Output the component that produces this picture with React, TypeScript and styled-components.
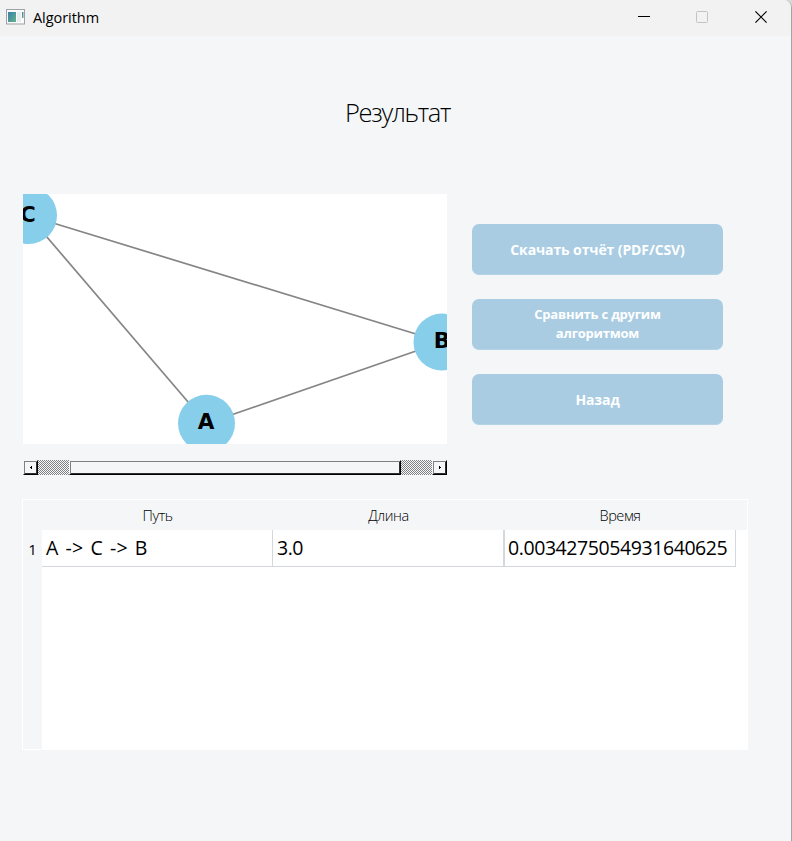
import React from 'react';
import styled, { createGlobalStyle } from 'styled-components';

const GlobalStyle = createGlobalStyle`
  * { box-sizing: border-box; }
  body {
    margin: 0;
    background: #d9dad8;
    font-family: "Open Sans", "Noto Sans", sans-serif;
    color: #000;
  }
`;

const Window = styled.div`
  width: 792px;
  height: 841px;
  overflow: hidden;
  background: #f4f6f8;
  border-right: 1px solid #a3a4a5;
  border-radius: 0 8px 0 0;
`;

const TitleBar = styled.header`
  display: flex;
  align-items: center;
  height: 36px;
  padding: 0 1px 0 6px;
  background: #f2f2f2;
`;

const IconSvg = styled.svg`
  margin-bottom: 2px;
`;

const WindowTitle = styled.span`
  flex: 1;
  margin-left: 8px;
  font-size: 14.5px;
  line-height: 20px;
  letter-spacing: -0.05px;
`;

const WindowButton = styled.button`
  display: flex;
  align-items: center;
  justify-content: center;
  width: 58.5px;
  height: 34px;
  margin-bottom: 2px;
  padding: 0;
  border: 0;
  background: none;
`;

const Heading = styled.h1`
  margin: 57px 0 0;
  padding-left: 4px;
  height: 38px;
  font-size: 25.5px;
  font-weight: 300;
  line-height: 38px;
  text-align: center;
  letter-spacing: -1.3px;
`;

const Body = styled.main`
  display: flex;
  gap: 25px;
  margin: 63px 0 0 23px;
`;

const GraphColumn = styled.section`
  width: 424px;
`;

const Canvas = styled.svg`
  display: block;
  background: #fff;
`;

const ScrollBar = styled.div`
  display: flex;
  height: 15px;
  margin-top: 16px;
  background: repeating-conic-gradient(#808080 0 25%, #f8f9fa 0 50%) 0 0 / 2px 2px;
`;

const ScrollPart = styled.div<{ $width: number; $gap?: number }>`
  display: flex;
  align-items: center;
  justify-content: center;
  width: ${(p) => p.$width}px;
  height: 15px;
  margin-left: ${(p) => p.$gap ?? 0}px;
  border: 1px solid;
  border-color: #f4f6f8 #000 #000 #f4f6f8;
  background: #f4f6f8;
  box-shadow: inset 1px 1px #808080, inset -1px -1px #303030;
`;

const Actions = styled.nav`
  display: flex;
  flex-direction: column;
  gap: 24px;
  width: 251px;
  padding-top: 30px;
`;

const ActionButton = styled.button<{ $size: number; $spacing: number }>`
  height: 51px;
  padding: 0 20px;
  border: 0;
  border-bottom: 1px solid #b4d3e6;
  border-radius: 7px;
  background: #a9cce3;
  color: #fff;
  font-family: "Open Sans", "Noto Sans", sans-serif;
  font-size: ${(p) => p.$size}px;
  font-weight: 700;
  line-height: 19px;
  letter-spacing: ${(p) => p.$spacing}px;
  white-space: pre;
`;

const Table = styled.section`
  display: grid;
  grid-template-columns: 19px 231px 231px 232px 11px;
  grid-template-rows: 30px 37px 1fr;
  width: 726px;
  height: 251px;
  margin: 24px 0 0 22px;
  border: 1px solid #fff;
  background: #fff;
`;

const HeaderFill = styled.div`
  background: #f4f6f8;
`;

const ColumnHeader = styled(HeaderFill)`
  padding-top: 1px;
  text-align: center;
  font-size: 14.5px;
  font-weight: 300;
  line-height: 30px;
  letter-spacing: -0.45px;
`;

const RowHeader = styled(HeaderFill)`
  padding-top: 1px;
  text-align: center;
  font-size: 15px;
  line-height: 37px;
`;

const Cell = styled.div<{ $spacing: number; $wordSpacing?: number; $double?: boolean }>`
  padding-left: ${(p) => (p.$double ? 3 : 4)}px;
  border: solid #d4d7db;
  border-width: 0 1px 1px ${(p) => (p.$double ? 1 : 0)}px;
  font-size: 19.5px;
  line-height: 36px;
  letter-spacing: ${(p) => p.$spacing}px;
  word-spacing: ${(p) => p.$wordSpacing ?? 0}px;
  white-space: nowrap;
`;

const edges = [
  [28.5, 215.5, 206.5, 423.5],
  [28.5, 215.5, 442, 342],
  [206.5, 423.5, 442, 342],
];

const nodes = [
  { label: 'C', x: 28.5, y: 215.5, tx: 28 },
  { label: 'A', x: 206.5, y: 423.3, tx: 206 },
  { label: 'B', x: 442, y: 342, tx: 442 },
];

const Graph = () => (
  <Canvas width="424" height="250" viewBox="23 194 424 250">
    {edges.map(([x1, y1, x2, y2], i) => (
      <line key={i} x1={x1} y1={y1} x2={x2} y2={y2} stroke="#858585" strokeWidth="1.7" />
    ))}
    {nodes.map((n) => (
      <g key={n.label}>
        <circle cx={n.x} cy={n.y} r="28.5" fill="#87ceeb" />
        <text
          x={n.tx}
          y={n.y + 6}
          textAnchor="middle"
          fontFamily="DejaVu Sans, sans-serif"
          fontWeight="700"
          fontSize="21.5"
        >
          {n.label}
        </text>
      </g>
    ))}
  </Canvas>
);

const AppIcon = () => (
  <IconSvg width="19" height="16" viewBox="0 0 19 16">
    <defs>
      <linearGradient id="pane" x1="0" y1="0" x2="1" y2="1">
        <stop offset="0" stopColor="#397fae" />
        <stop offset="1" stopColor="#65b389" />
      </linearGradient>
    </defs>
    <rect x="0.5" y="0.5" width="18" height="14.5" fill="#fafafa" stroke="#9da1a8" />
    <rect x="2" y="3" width="8" height="10" fill="url(#pane)" />
    <rect x="11" y="3" width="4" height="10" fill="#e9ecec" />
    <rect x="16" y="3" width="1.5" height="6" fill="url(#pane)" />
  </IconSvg>
);

export default function App() {
  return (
    <>
      <GlobalStyle />
      <Window>
        <TitleBar>
          <AppIcon />
          <WindowTitle>Algorithm</WindowTitle>
          <WindowButton aria-label="Minimize">
            <svg width="12" height="12"><path d="M0 5.5h12" stroke="#000" /></svg>
          </WindowButton>
          <WindowButton aria-label="Maximize" disabled>
            <svg width="12" height="12">
              <rect x="0.5" y="0.5" width="11" height="11" rx="1" fill="none" stroke="#c3c3c3" />
            </svg>
          </WindowButton>
          <WindowButton aria-label="Close">
            <svg width="12" height="12"><path d="M.4.4l11.2 11.2M11.6.4L.4 11.6" stroke="#000" strokeWidth="1.2" /></svg>
          </WindowButton>
        </TitleBar>
        <Heading>Результат</Heading>
        <Body>
          <GraphColumn>
            <Graph />
            <ScrollBar>
              <ScrollPart $width={15}>
                <svg width="2" height="3"><path d="M1 0h1v3h-1v-1h-1v-1h1z" /></svg>
              </ScrollPart>
              <ScrollPart $width={332} $gap={31} />
              <ScrollPart $width={15} $gap={31}>
                <svg width="2" height="3"><path d="M0 0h1v1h1v1h-1v1h-1z" /></svg>
              </ScrollPart>
            </ScrollBar>
          </GraphColumn>
          <Actions>
            <ActionButton $size={14} $spacing={-0.1}>Скачать отчёт (PDF/CSV)</ActionButton>
            <ActionButton $size={13} $spacing={-0.2}>{'Сравнить с другим\nалгоритмом'}</ActionButton>
            <ActionButton $size={14} $spacing={-0.1}>Назад</ActionButton>
          </Actions>
        </Body>
        <Table>
          <HeaderFill />
          <ColumnHeader>Путь</ColumnHeader>
          <ColumnHeader>Длина</ColumnHeader>
          <ColumnHeader>Время</ColumnHeader>
          <HeaderFill />
          <RowHeader>1</RowHeader>
          <Cell $spacing={0.35} $wordSpacing={1.4}>A -&gt; C -&gt; B</Cell>
          <Cell $spacing={-0.45}>3.0</Cell>
          <Cell $spacing={-0.42} $double>0.0034275054931640625</Cell>
          <div />
          <HeaderFill />
        </Table>
      </Window>
    </>
  );
}
